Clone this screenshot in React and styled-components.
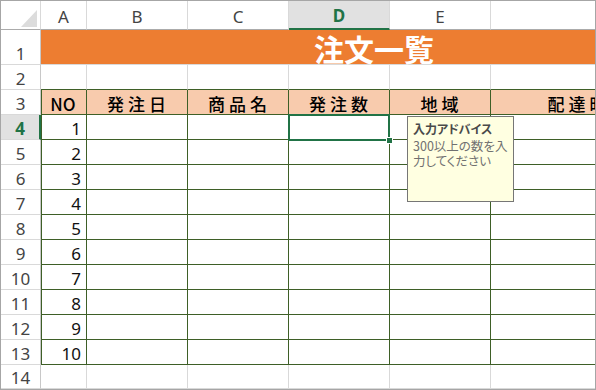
import styled, { createGlobalStyle, css } from "styled-components";

const GREEN = "#3e5f27";
const GRID = "#d9d9d9";
const ACTIVE = "#217346";

const GlobalStyle = createGlobalStyle`
  html, body { margin: 0; padding: 0; background: #fff; }
  body { font-family: "Noto Sans", "Noto Sans CJK JP", sans-serif; }
`;

const Sheet = styled.div`
  width: 596px;
  height: 390px;
  box-sizing: border-box;
  border: 1px solid #a6a6a6;
  overflow: hidden;
  display: grid;
  grid-template-columns: 40px 46px 101px 101px 101px 101px 216px;
  grid-template-rows: 29px 35px repeat(12, 25px) 24px;
`;

const Corner = styled.div`
  box-sizing: border-box;
  border-right: 1px solid ${GRID};
  border-bottom: 1px solid #ababab;
  display: flex;
  align-items: flex-end;
  justify-content: flex-end;
  padding: 0 3px 2px 0;
`;

const ColHeader = styled.div`
  box-sizing: border-box;
  border-right: 1px solid ${GRID};
  border-bottom: 1px solid #ababab;
  display: flex;
  align-items: center;
  justify-content: center;
  font-size: 17px;
  color: #444;
  padding-top: 2px;
  ${(p) =>
    p.$active &&
    css`
      background: #e1e1e1;
      border-bottom: 2px solid ${ACTIVE};
      color: ${ACTIVE};
      font-weight: 700;
    `}
`;

const RowHeader = styled.div`
  box-sizing: border-box;
  border-right: 1px solid #c8c8c8;
  border-bottom: 1px solid ${GRID};
  display: flex;
  align-items: flex-end;
  justify-content: center;
  font-size: 17px;
  line-height: 20px;
  color: #444;
  ${(p) =>
    p.$active &&
    css`
      background: #e1e1e1;
      border-right: 2px solid ${ACTIVE};
      color: ${ACTIVE};
      font-weight: 700;
    `}
`;

const Cell = styled.div`
  position: relative;
  box-sizing: border-box;
  border-right: 1px solid ${(p) => p.$right || GRID};
  border-bottom: 1px solid ${(p) => p.$bottom || GRID};
  background: ${(p) => p.$bg || "#fff"};
  ${(p) => p.$left && css`box-shadow: inset 1px 0 0 ${p.$left};`}
  display: flex;
  align-items: flex-end;
  justify-content: ${(p) => (p.$align === "right" ? "flex-end" : "center")};
  padding: 0 5px 0 4px;
  font-size: 17px;
  line-height: 20px;
  color: #111;
  white-space: nowrap;
`;

const HeadText = styled.span`
  font-family: "Noto Sans CJK JP", sans-serif;
  font-size: 17px;
  font-weight: 500;
  letter-spacing: ${(p) => (p.$wide ? "4px" : "0")};
  margin-right: ${(p) => (p.$wide ? "-4px" : "0")};
  color: #000;
`;

const TitleCell = styled.div`
  grid-column: 2 / span 6;
  box-sizing: border-box;
  background: #ed7d31;
  border-bottom: 1px solid ${GRID};
  display: flex;
  align-items: center;
  justify-content: center;
  font-family: "Noto Sans CJK JP", sans-serif;
  font-weight: 700;
  font-size: 30px;
  color: #fff;
  padding-top: 1px;
`;

const Selection = styled.div`
  position: absolute;
  left: -1px;
  right: -1px;
  top: -1px;
  bottom: -2px;
  border: 2px solid ${ACTIVE};
  z-index: 2;
`;

const Handle = styled.span`
  position: absolute;
  right: -5px;
  bottom: -5px;
  width: 5px;
  height: 5px;
  background: ${ACTIVE};
  border: 1px solid #fff;
`;

const Tip = styled.div`
  position: absolute;
  left: 118px;
  top: 1px;
  width: 107px;
  height: 86px;
  box-sizing: border-box;
  background: #ffffe1;
  border: 1px solid #767676;
  padding: 4px 5px;
  z-index: 3;
  font-family: "Noto Sans CJK JP", sans-serif;
  font-feature-settings: "palt";
  text-align: left;
  white-space: normal;
`;

const TipTitle = styled.div`
  font-size: 12px;
  font-weight: 700;
  line-height: 16px;
  color: #4a4a4a;
  margin-bottom: 1px;
`;

const TipBody = styled.div`
  font-size: 12.5px;
  line-height: 15px;
  color: #707070;
`;

const cols = ["A", "B", "C", "D", "E", "F"];
const heads = [
  { t: "NO" },
  { t: "発注日", wide: true },
  { t: "商品名", wide: true },
  { t: "発注数", wide: true },
  { t: "地域", wide: true },
  { t: "配達時間帯", wide: true },
];

function Triangle() {
  return (
    <svg width="16" height="17" viewBox="0 0 16 17">
      <polygon points="16,0 16,17 0,17" fill="#dcdcdc" />
    </svg>
  );
}

function rowCells(r) {
  return cols.map((c, i) => {
    const key = c + r;
    if (r === 2) {
      return <Cell key={key} $bottom={GREEN} />;
    }
    if (r === 14) {
      return <Cell key={key} />;
    }
    const props = {
      $right: GREEN,
      $bottom: GREEN,
      $left: i === 0 ? GREEN : undefined,
    };
    if (r === 3) {
      return (
        <Cell key={key} {...props} $bg="#f8cbad">
          <HeadText $wide={heads[i].wide}>{heads[i].t}</HeadText>
        </Cell>
      );
    }
    if (i === 0) {
      return (
        <Cell key={key} {...props} $align="right">
          {r - 3}
        </Cell>
      );
    }
    if (r === 4 && c === "D") {
      return (
        <Cell key={key} {...props}>
          <Selection>
            <Handle />
          </Selection>
          <Tip>
            <TipTitle>入力アドバイス</TipTitle>
            <TipBody>
              300以上の数を入
              <br />
              力してください
            </TipBody>
          </Tip>
        </Cell>
      );
    }
    return <Cell key={key} {...props} />;
  });
}

export default function App() {
  const rows = [];
  for (let r = 2; r <= 14; r++) rows.push(r);

  return (
    <>
      <GlobalStyle />
      <Sheet>
        <Corner>
          <Triangle />
        </Corner>
        {cols.map((c) => (
          <ColHeader key={c} $active={c === "D"}>
            {c}
          </ColHeader>
        ))}

        <RowHeader>1</RowHeader>
        <TitleCell>注文一覧</TitleCell>

        {rows.map((r) => [
          <RowHeader key={"h" + r} $active={r === 4}>
            {r}
          </RowHeader>,
          ...rowCells(r),
        ])}
      </Sheet>
    </>
  );
}
